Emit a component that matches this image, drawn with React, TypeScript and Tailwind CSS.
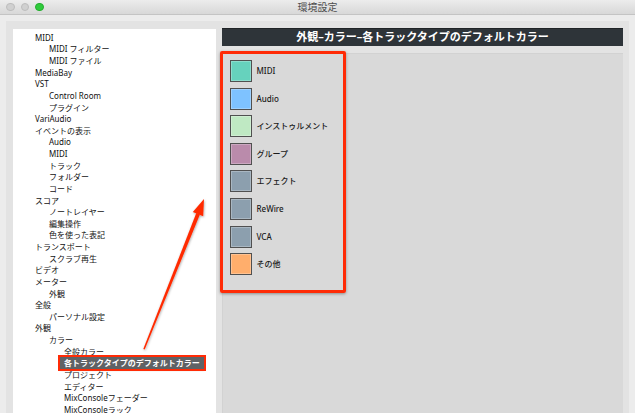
import React from 'react';

const treeItems: { label: string; level: number; selected?: boolean }[] = [
  { label: 'MIDI', level: 0 },
  { label: 'MIDI フィルター', level: 1 },
  { label: 'MIDI ファイル', level: 1 },
  { label: 'MediaBay', level: 0 },
  { label: 'VST', level: 0 },
  { label: 'Control Room', level: 1 },
  { label: 'プラグイン', level: 1 },
  { label: 'VariAudio', level: 0 },
  { label: 'イベントの表示', level: 0 },
  { label: 'Audio', level: 1 },
  { label: 'MIDI', level: 1 },
  { label: 'トラック', level: 1 },
  { label: 'フォルダー', level: 1 },
  { label: 'コード', level: 1 },
  { label: 'スコア', level: 0 },
  { label: 'ノートレイヤー', level: 1 },
  { label: '編集操作', level: 1 },
  { label: '色を使った表記', level: 1 },
  { label: 'トランスポート', level: 0 },
  { label: 'スクラブ再生', level: 1 },
  { label: 'ビデオ', level: 0 },
  { label: 'メーター', level: 0 },
  { label: '外観', level: 1 },
  { label: '全般', level: 0 },
  { label: 'パーソナル設定', level: 1 },
  { label: '外観', level: 0 },
  { label: 'カラー', level: 1 },
  { label: '全般カラー', level: 2 },
  { label: '各トラックタイプのデフォルトカラー', level: 2, selected: true },
  { label: 'プロジェクト', level: 2 },
  { label: 'エディター', level: 2 },
  { label: 'MixConsoleフェーダー', level: 2 },
  { label: 'MixConsoleラック', level: 2 },
];

const swatches = [
  { label: 'MIDI', color: 'bg-[#66d2bd]' },
  { label: 'Audio', color: 'bg-[#7ec2ff]' },
  { label: 'インストゥルメント', color: 'bg-[#bfe9c3]' },
  { label: 'グループ', color: 'bg-[#ba8bab]' },
  { label: 'エフェクト', color: 'bg-[#8c9fae]' },
  { label: 'ReWire', color: 'bg-[#8c9fae]' },
  { label: 'VCA', color: 'bg-[#8c9fae]' },
  { label: 'その他', color: 'bg-[#ffae6c]' },
];

const indent = ['pl-[22px]', 'pl-[36px]', 'pl-[51px]'];

const font = "font-['Noto_Sans','Noto_Sans_CJK_JP',sans-serif]";

export default function App() {
  return (
    <div className={`relative w-[635px] h-[413px] overflow-hidden bg-[#ececec] flex flex-col ${font}`}>
      {/* title bar */}
      <div className="relative h-[15px] shrink-0 bg-gradient-to-b from-[#ececec] to-[#d8d8d8] border-b border-[#c4c4c4] flex items-center">
        <div className="flex items-center gap-[6px] pl-[6px]">
          <span className="w-[8.5px] h-[8.5px] rounded-full bg-[#d0d0d0] border border-[#bdbdbd]" />
          <span className="w-[8.5px] h-[8.5px] rounded-full bg-[#d0d0d0] border border-[#bdbdbd]" />
          <span className="w-[8.5px] h-[8.5px] rounded-full bg-[#2fcb3c] border border-[#24ad2f]" />
        </div>
        <div className="absolute inset-0 flex items-center justify-center text-[10px] text-[#4d4d4d]">環境設定</div>
      </div>

      {/* body */}
      <div className="flex-1 pt-[6px] px-[6px] min-h-0">
        <div className="h-full bg-[#e3e3e3] pl-[7px] pr-[6px] pt-[7px] flex gap-[6px]">
          {/* tree */}
          <div className="w-[203px] mt-[1px] bg-white pt-[3px] flex flex-col shrink-0">
            {treeItems.map((item, i) => (
              <div key={i} className={`h-[11.625px] flex items-center text-[8px] text-[#111] whitespace-nowrap ${indent[item.level]}`}>
                {item.selected ? (
                  <span className="-ml-[4px] px-[4px] h-[12px] flex items-center bg-[#5f6265] text-white font-bold outline-2 outline-[#ff2b06] shadow-[0_1px_2px_rgba(0,0,0,0.4)]">
                    {item.label}
                  </span>
                ) : (
                  item.label
                )}
              </div>
            ))}
          </div>

          {/* right column */}
          <div className="flex-1 flex flex-col">
            <div className="h-[18px] shrink-0 bg-[#2e3439] border-t border-[#1f2326] flex items-center justify-center text-white text-[11px] font-bold">
              外観–カラー–各トラックタイプのデフォルトカラー
            </div>
            <div className="relative flex-1 mt-[7px] bg-[#d9d9d9] border-t border-l border-[#d2d2d2] pl-[7px] pt-[6px] flex flex-col gap-[5.6px]">
              {swatches.map((s) => (
                <div key={s.label} className="flex items-center gap-[4.5px] h-[22px]">
                  <span className={`w-[22px] h-[22px] ${s.color} border border-[#505050] shadow-[inset_0_0_0_1px_rgba(255,255,255,0.25)]`} />
                  <span className="text-[8px] text-[#1a1a1a] font-medium">{s.label}</span>
                </div>
              ))}
              {/* annotation box */}
              <div className="absolute -left-[3px] -top-[3px] w-[126px] h-[242px] border-[3px] border-[#ff2b06] rounded-[2px] shadow-[0_1px_3px_rgba(0,0,0,0.35)]" />
            </div>
          </div>
        </div>
      </div>

      {/* arrow annotation */}
      <svg className="absolute left-0 top-0 pointer-events-none" width="635" height="413" viewBox="0 0 635 413">
        <defs>
          <filter id="sh" x="-20%" y="-20%" width="140%" height="140%">
            <feDropShadow dx="0.5" dy="1" stdDeviation="1" floodColor="#000" floodOpacity="0.35" />
          </filter>
        </defs>
        <g filter="url(#sh)" fill="#ff2b06">
          <polygon points="143.3,349 144.7,349.5 199.9,214.5 196.3,213.1" />
          <polygon points="204,199 203.2,216.2 192.8,212" />
        </g>
      </svg>
    </div>
  );
}
